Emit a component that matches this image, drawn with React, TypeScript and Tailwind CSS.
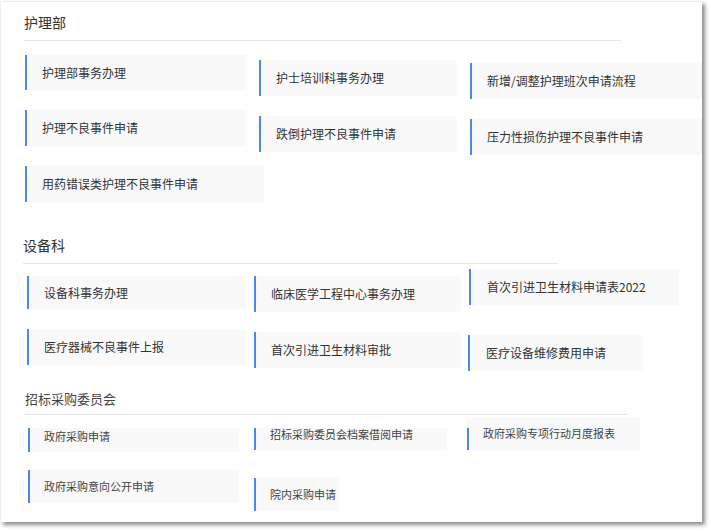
import React from 'react';

const font = { fontFamily: '"Noto Sans CJK SC", "Noto Sans", sans-serif' };

function Card({ text, className, textClass = '' }: { text: string; className: string; textClass?: string }) {
    return (
        <div className={`shrink-0 flex items-center bg-[#f9f9f9] border-l-2 border-[#4a87ee] text-[12px] leading-none text-[#333] ${className}`}>
            <span className={`whitespace-nowrap ${textClass}`}>{text}</span>
        </div>
    );
}

export default function App() {
    return (
        <div className="w-[711px] h-[532px] bg-white pt-[1px] overflow-hidden" style={font}>
            <div className="w-[702px] h-[521px] bg-white border-l border-t border-[#eeeeee] shadow-[3px_3px_4px_rgba(0,0,0,0.45)] overflow-hidden">

                {/* 护理部 */}
                <h2 className="ml-[23px] mt-[10px] text-[14px] leading-[20px] text-[#333]">护理部</h2>
                <div className="ml-[23px] mt-[8px] w-[597px] h-px bg-[#e6e6e6]" />

                <div className="flex items-start mt-[14px]">
                    <Card text="护理部事务办理" className="ml-[24px] w-[221px] h-[35px] pl-[15px]" />
                    <Card text="护士培训科事务办理" className="ml-[13px] mt-[5px] w-[198px] h-[36px] pl-[15px]" />
                    <Card text="新增/调整护理班次申请流程" className="ml-[13px] mt-[8px] w-[232px] h-[36px] pl-[15px]" />
                </div>
                <div className="flex items-start mt-[11px]">
                    <Card text="护理不良事件申请" className="ml-[24px] w-[221px] h-[36px] pl-[15px]" />
                    <Card text="跌倒护理不良事件申请" className="ml-[13px] mt-[6px] w-[198px] h-[36px] pl-[15px]" />
                    <Card text="压力性损伤护理不良事件申请" className="ml-[13px] mt-[9px] w-[232px] h-[36px] pl-[15px]" />
                </div>
                <div className="flex items-start mt-[11px]">
                    <Card text="用药错误类护理不良事件申请" className="ml-[24px] w-[239px] h-[36px] pl-[15px]" />
                </div>

                {/* 设备科 */}
                <h2 className="ml-[22px] mt-[33px] text-[14px] leading-[20px] text-[#333]">设备科</h2>
                <div className="ml-[22px] mt-[8px] w-[535px] h-px bg-[#e6e6e6]" />

                <div className="flex items-start mt-[5px]">
                    <Card text="设备科事务办理" className="ml-[26px] mt-[7px] w-[219px] h-[33px] pl-[15px]" />
                    <Card text="临床医学工程中心事务办理" className="ml-[8px] mt-[7px] w-[207px] h-[36px] pl-[15px]" />
                    <Card text="首次引进卫生材料申请表2022" className="ml-[8px] w-[210px] h-[36px] pl-[16px]" />
                </div>
                <div className="flex items-start mt-[17px]">
                    <Card text="医疗器械不良事件上报" className="ml-[26px] w-[219px] h-[36px] pl-[15px]" />
                    <Card text="首次引进卫生材料审批" className="ml-[8px] mt-[3px] w-[207px] h-[36px] pl-[15px]" />
                    <Card text="医疗设备维修费用申请" className="ml-[7px] mt-[6px] w-[175px] h-[36px] pl-[16px]" />
                </div>

                {/* 招标采购委员会 */}
                <h2 className="ml-[24px] mt-[19px] text-[13px] leading-[18px] text-[#444]">招标采购委员会</h2>
                <div className="ml-[24px] mt-[6px] w-[603px] h-px bg-[#e6e6e6]" />

                <div className="flex items-start mt-[2px]">
                    <Card text="政府采购申请" className="ml-[27px] mt-[11px] w-[211px] h-[24px] pl-[14px] pb-[8px]" textClass="text-[11px] text-[#444]" />
                    <Card text="招标采购委员会档案借阅申请" className="ml-[15px] mt-[11px] w-[193px] h-[22px] pl-[14px] pb-[10px]" textClass="text-[11px] text-[#444]" />
                    <div className="shrink-0 ml-[20px] w-[173px] h-[33px] bg-[#f9f9f9] flex flex-col">
                        <div className="mt-[11px] h-[22px] border-l-2 border-[#4a87ee] pl-[14px]">
                            <span className="block whitespace-nowrap text-[11px] leading-none text-[#444]">政府采购专项行动月度报表</span>
                        </div>
                    </div>
                </div>
                <div className="flex items-start mt-[18px]">
                    <Card text="政府采购意向公开申请" className="ml-[27px] w-[211px] h-[33px] pl-[14px]" textClass="text-[11px] text-[#444]" />
                    <Card text="院内采购申请" className="ml-[15px] mt-[8px] w-[85px] h-[33px] pl-[14px]" textClass="text-[11px] text-[#444]" />
                </div>
            </div>
        </div>
    );
}
